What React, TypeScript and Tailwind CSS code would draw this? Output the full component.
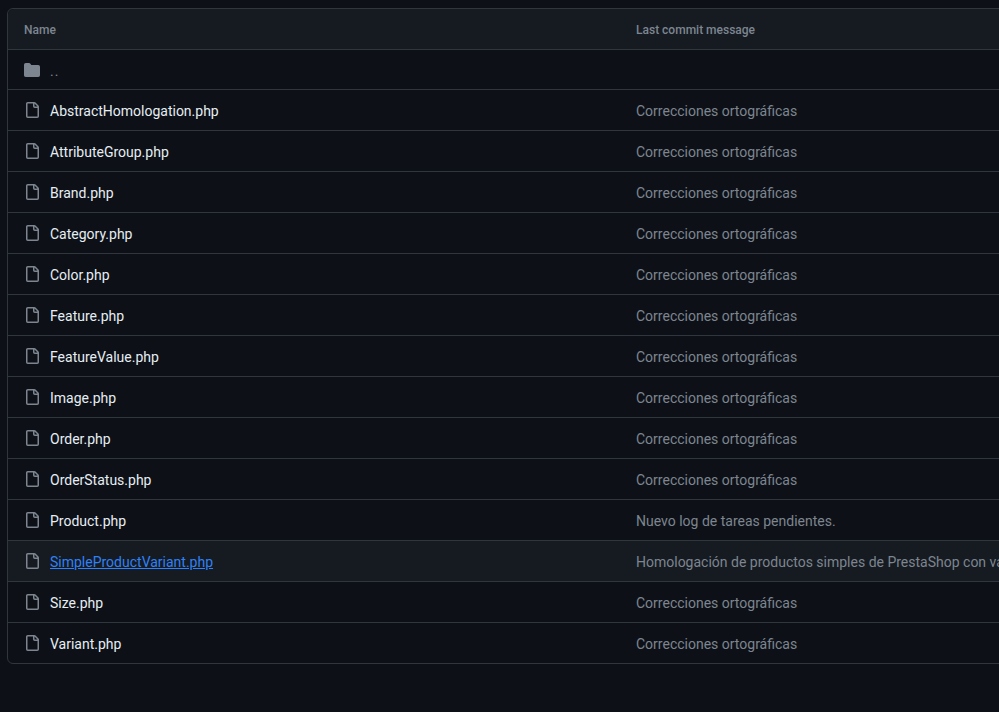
const files = [
    { name: "AbstractHomologation.php", message: "Correcciones ortográficas" },
    { name: "AttributeGroup.php", message: "Correcciones ortográficas" },
    { name: "Brand.php", message: "Correcciones ortográficas" },
    { name: "Category.php", message: "Correcciones ortográficas" },
    { name: "Color.php", message: "Correcciones ortográficas" },
    { name: "Feature.php", message: "Correcciones ortográficas" },
    { name: "FeatureValue.php", message: "Correcciones ortográficas" },
    { name: "Image.php", message: "Correcciones ortográficas" },
    { name: "Order.php", message: "Correcciones ortográficas" },
    { name: "OrderStatus.php", message: "Correcciones ortográficas" },
    { name: "Product.php", message: "Nuevo log de tareas pendientes." },
    { name: "SimpleProductVariant.php", message: "Homologación de productos simples de PrestaShop con variantes", hovered: true },
    { name: "Size.php", message: "Correcciones ortográficas" },
    { name: "Variant.php", message: "Correcciones ortográficas" },
];

function FileIcon() {
    return (
        <svg className="w-4 h-4 shrink-0 text-[#7d8590]" viewBox="0 0 16 16" fill="currentColor">
            <path d="M2 1.75C2 .784 2.784 0 3.75 0h6.586c.464 0 .909.184 1.237.513l2.914 2.914c.329.328.513.773.513 1.237v9.586A1.75 1.75 0 0 1 13.25 16h-9.5A1.75 1.75 0 0 1 2 14.25Zm1.75-.25a.25.25 0 0 0-.25.25v12.5c0 .138.112.25.25.25h9.5a.25.25 0 0 0 .25-.25V6h-2.75A1.75 1.75 0 0 1 9 4.25V1.5Zm6.75.062V4.25c0 .138.112.25.25.25h2.688l-.011-.013-2.914-2.914-.013-.011Z" />
        </svg>
    );
}

function FolderIcon() {
    return (
        <svg className="w-4 h-4 shrink-0 text-[#7d8590]" viewBox="0 0 16 16" fill="currentColor">
            <path d="M1.75 1A1.75 1.75 0 0 0 0 2.75v10.5C0 14.216.784 15 1.75 15h12.5A1.75 1.75 0 0 0 16 13.25v-8.5A1.75 1.75 0 0 0 14.25 3H7.5a.25.25 0 0 1-.2-.1l-.9-1.2C6.07 1.26 5.55 1 5 1H1.75Z" />
        </svg>
    );
}

export default function App() {
    return (
        <div className="h-[712px] w-[999px] overflow-hidden bg-[#0d1117] pt-2 pl-[7px] font-['Roboto','Liberation_Sans',sans-serif] text-sm">
            <div className="w-[1200px] rounded-md border border-[#30363d]">
                {/* Header */}
                <div className="flex h-[41px] items-center rounded-t-md border-b border-[#30363d] bg-[#161b22] pt-0.5 text-xs font-medium text-[#7d8590]">
                    <div className="w-[628px] shrink-0 pl-4">Name</div>
                    <div>Last commit message</div>
                </div>

                {/* Parent directory */}
                <div className="flex h-10 items-center gap-2.5 border-b border-[#30363d] pl-4">
                    <FolderIcon />
                    <span className="pt-0.5 tracking-[1px] text-[#7d8590]">..</span>
                </div>

                {files.map((file, i) => (
                    <div
                        key={file.name}
                        className={`flex items-center ${i < files.length - 1 ? "h-[41px] border-b border-[#30363d]" : "h-10"} ${file.hovered ? "bg-[#161b22]" : ""}`}
                    >
                        <div className="flex w-[628px] shrink-0 items-center gap-2.5 pl-4">
                            <FileIcon />
                            <span className={`pt-0.5 ${file.hovered ? "text-[#2f81f7] underline" : "text-[#e6edf3]"}`}>{file.name}</span>
                        </div>
                        <div className="whitespace-nowrap pt-0.5 text-[#7d8590]">{file.message}</div>
                    </div>
                ))}
            </div>
        </div>
    );
}
